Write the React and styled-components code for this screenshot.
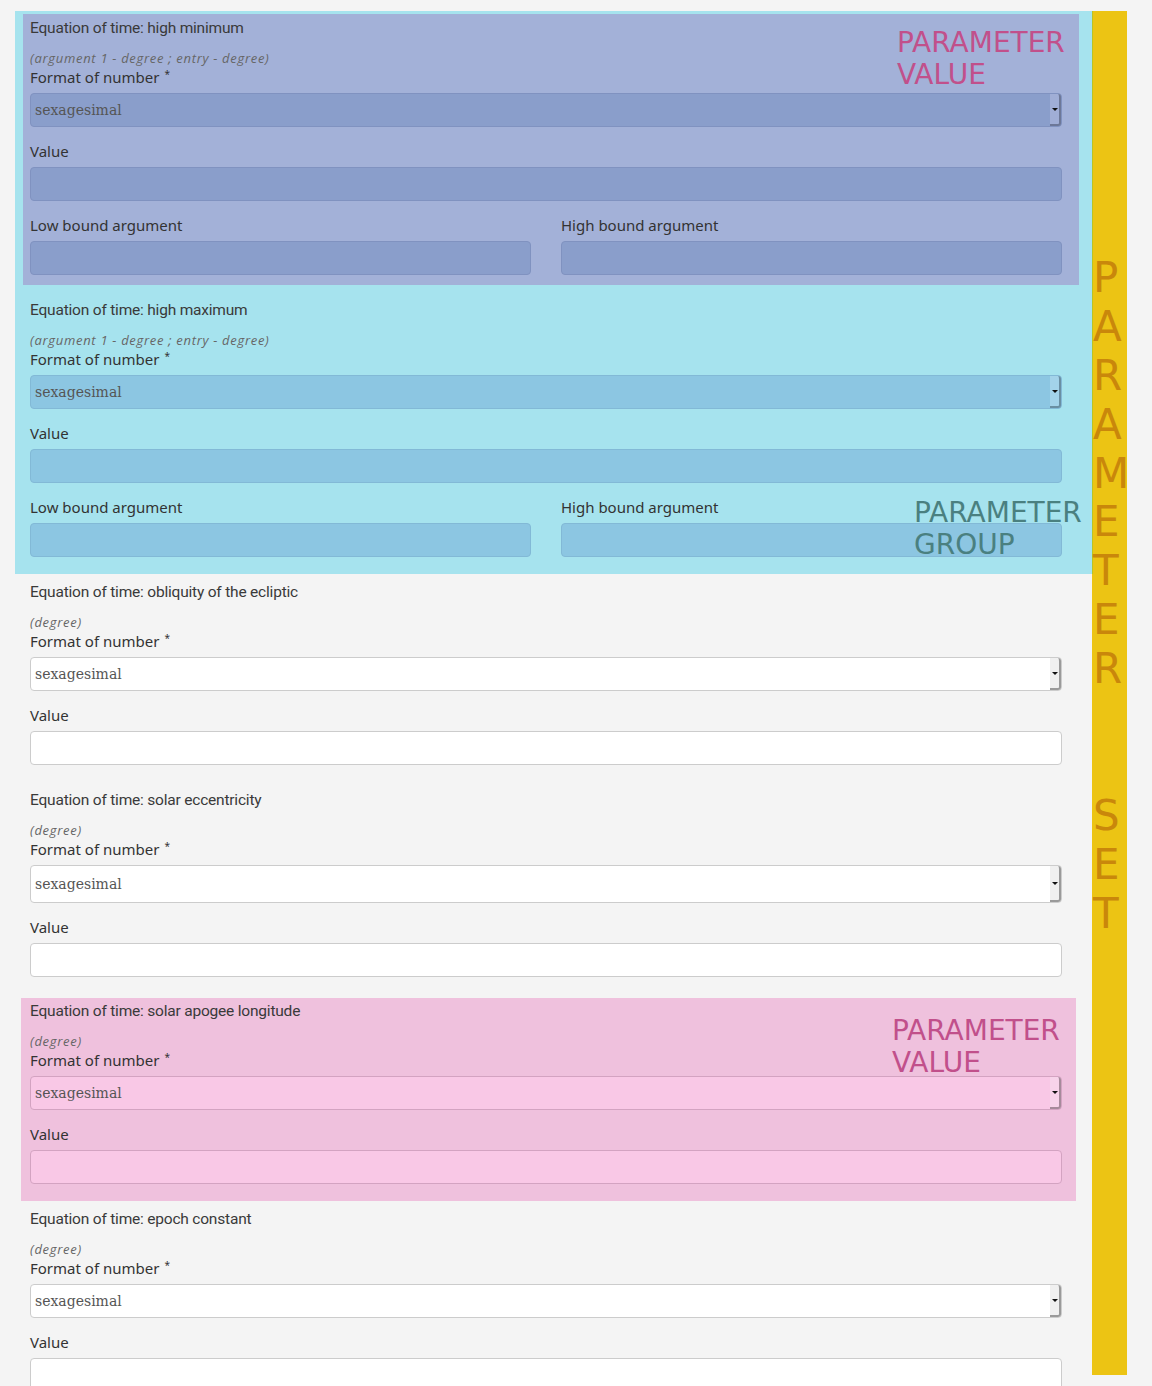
import React from "react";
import styled, { createGlobalStyle } from "styled-components";

const Global = createGlobalStyle`
  html, body { margin: 0; padding: 0; background: #f4f4f4; }
  body { font-family: "Noto Sans", sans-serif; }
`;

const Page = styled.div`
  display: flex;
  align-items: flex-start;
  padding: 11px 0 0 15px;
`;

const Column = styled.div`
  width: 1077px;
  display: flex;
  flex-direction: column;
`;

const Group = styled.div`
  position: relative;
  background: #a6e3ee;
  padding: 3px 13px 7px 8px;
  display: flex;
  flex-direction: column;
`;

const Block = styled.div`
  position: relative;
  background: ${(p) => p.$bg || "transparent"};
  padding: ${(p) => p.$pad};
  margin: ${(p) => p.$margin || "0"};
  display: flex;
  flex-direction: column;
`;

const Title = styled.div`
  font-family: "Roboto", sans-serif;
  font-size: 15.5px;
  letter-spacing: -0.2px;
  height: 20px;
  line-height: 20px;
  color: #3a3a3a;
`;

const Sub = styled.div`
  margin-top: 12px;
  font-family: "Open Sans", sans-serif;
  font-style: italic;
  font-size: 13px;
  letter-spacing: 0.7px;
  height: 16px;
  line-height: 16px;
  color: #666;
`;

const Label = styled.div`
  margin-top: ${(p) => p.$mt ?? 14}px;
  font-family: "Noto Sans", sans-serif;
  font-size: 15px;
  height: 20px;
  line-height: 20px;
  color: #333;
`;

const Required = styled.span`
  display: inline-block;
  font-size: 10px;
  line-height: 10px;
  vertical-align: top;
  margin-top: 2px;
  margin-left: 5px;
`;

const skins = {
  blue: { bg: "#8a9ecb", border: "#8092c0", arrow: "#a0aed6", shadow: "#6d7898" },
  cyan: { bg: "#8cc6e2", border: "#82b9d6", arrow: "#a3d3ea", shadow: "#6a8fa3" },
  pink: { bg: "#f9c8e6", border: "#d3a3c1", arrow: "#f7d3ea", shadow: "#a68a9b" },
  white: { bg: "#ffffff", border: "#cccccc", arrow: "#f0f0f0", shadow: "#9a9a9a" },
};

const Select = styled.div`
  margin-top: 6px;
  height: ${(p) => p.$h || 34}px;
  box-sizing: border-box;
  border: 1px solid ${(p) => skins[p.$skin].border};
  border-radius: 4px;
  background: ${(p) => skins[p.$skin].bg};
  display: flex;
  align-items: stretch;
  font-family: "DejaVu Serif", serif;
  font-size: 14px;
  color: #555;
`;

const SelectText = styled.span`
  flex: 1;
  display: flex;
  align-items: center;
  padding-left: 4px;
`;

const Arrow = styled.span`
  width: 9px;
  background: ${(p) => skins[p.$skin].arrow};
  border-right: 2px solid ${(p) => skins[p.$skin].shadow};
  border-bottom: 2px solid ${(p) => skins[p.$skin].shadow};
  border-radius: 0 3px 3px 0;
  display: flex;
  align-items: center;
  justify-content: center;
  &::after {
    content: "";
    border-left: 3px solid transparent;
    border-right: 3px solid transparent;
    border-top: 3px solid #111;
  }
`;

const Input = styled.div`
  margin-top: 6px;
  height: 34px;
  box-sizing: border-box;
  border: 1px solid ${(p) => skins[p.$skin].border};
  border-radius: 4px;
  background: ${(p) => skins[p.$skin].bg};
`;

const Pair = styled.div`
  display: grid;
  grid-template-columns: 1fr 1fr;
  column-gap: 30px;
`;

const Field = styled.div`
  display: flex;
  flex-direction: column;
`;

const Tag = styled.div`
  position: absolute;
  left: ${(p) => p.$left}px;
  top: ${(p) => p.$top}px;
  font-family: "DejaVu Sans", sans-serif;
  font-size: 28px;
  line-height: 32px;
  color: ${(p) => p.$color};
  pointer-events: none;
  white-space: nowrap;
`;

const SetBar = styled.div`
  width: 35px;
  height: 1364px;
  flex-shrink: 0;
  background:
    linear-gradient(#b9c425, #b9c425) left top / 1px 563px no-repeat,
    #ecc414;
  padding-top: 243px;
  box-sizing: border-box;
  font-family: "DejaVu Sans", sans-serif;
  font-size: 42px;
  color: #c9870b;
`;

const SetLetter = styled.div`
  height: 48.9px;
  line-height: 48.9px;
  padding-left: 1px;
`;

function Param({ title, sub, skin, bounds, selectH, bg, pad, margin, children }) {
  return (
    <Block $bg={bg} $pad={pad} $margin={margin}>
      <Title>{title}</Title>
      <Sub>{sub}</Sub>
      <Label $mt={1}>
        Format of number<Required>*</Required>
      </Label>
      <Select $skin={skin} $h={selectH}>
        <SelectText>sexagesimal</SelectText>
        <Arrow $skin={skin} />
      </Select>
      <Label>Value</Label>
      <Input $skin={skin} />
      {bounds && (
        <Pair>
          <Field>
            <Label>Low bound argument</Label>
            <Input $skin={skin} />
          </Field>
          <Field>
            <Label>High bound argument</Label>
            <Input $skin={skin} />
          </Field>
        </Pair>
      )}
      {children}
    </Block>
  );
}

const ARG = "(argument 1 - degree ; entry - degree)";
const letters = ["P", "A", "R", "A", "M", "E", "T", "E", "R", "\u00a0", "\u00a0", "S", "E", "T"];

export default function App() {
  return (
    <>
      <Global />
      <Page>
        <Column>
          <Group>
            <Param
              title="Equation of time: high minimum"
              sub={ARG}
              skin="blue"
              bounds
              bg="#a3b1d8"
              pad="4px 17px 10px 7px"
            >
              <Tag $left={874} $top={13} $color="#c1508b">
                PARAMETER
                <br />
                VALUE
              </Tag>
            </Param>
            <Param
              title="Equation of time: high maximum"
              sub={ARG}
              skin="cyan"
              bounds
              pad="4px 17px 10px 7px"
              margin="11px 0 0 0"
            />
            <Tag $left={899} $top={486} $color="#4a8080">
              PARAMETER
              <br />
              GROUP
            </Tag>
          </Group>
          <Param
            title="Equation of time: obliquity of the ecliptic"
            sub="(degree)"
            skin="white"
            pad="4px 30px 10px 15px"
            margin="4px 0 0 0"
          />
          <Param
            title="Equation of time: solar eccentricity"
            sub="(degree)"
            skin="white"
            selectH={38}
            pad="4px 30px 10px 15px"
            margin="11px 0 0 0"
          />
          <Param
            title="Equation of time: solar apogee longitude"
            sub="(degree)"
            skin="pink"
            bg="#efc1dd"
            pad="3px 14px 17px 9px"
            margin="11px 16px 0 6px"
          >
            <Tag $left={871} $top={17} $color="#c1508b">
              PARAMETER
              <br />
              VALUE
            </Tag>
          </Param>
          <Param
            title="Equation of time: epoch constant"
            sub="(degree)"
            skin="white"
            pad="4px 30px 10px 15px"
            margin="4px 0 0 0"
          />
        </Column>
        <SetBar>
          {letters.map((l, i) => (
            <SetLetter key={i}>{l}</SetLetter>
          ))}
        </SetBar>
      </Page>
    </>
  );
}
